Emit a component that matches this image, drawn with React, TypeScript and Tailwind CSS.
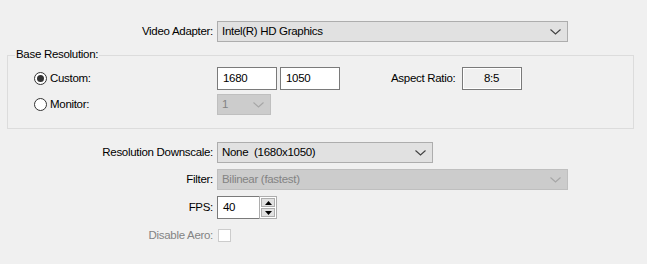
const Chevron = ({ disabled = false }: { disabled?: boolean }) => (
  <svg width="11" height="6" viewBox="0 0 11 6" className="shrink-0">
    <polyline
      points="0.5,0.5 5.5,5 10.5,0.5"
      fill="none"
      stroke={disabled ? '#a6a6a6' : '#404040'}
      strokeWidth="1.1"
    />
  </svg>
);

const Combo = ({
  value,
  width,
  disabled = false,
}: {
  value: string;
  width: string;
  disabled?: boolean;
}) => (
  <div
    className={`${width} h-[21px] flex items-center justify-between pl-[4px] pr-[6px] border ${
      disabled ? 'bg-[#cccccc] border-[#bfbfbf] text-[#838383]' : 'bg-[#e1e1e1] border-[#adadad] text-black'
    }`}
  >
    <span className="whitespace-pre">{value}</span>
    <Chevron disabled={disabled} />
  </div>
);

const Edit = ({ value }: { value: string }) => (
  <div className="w-[60px] h-[23px] flex items-center px-[5px] bg-white border border-[#7a7a7a]">{value}</div>
);

const Radio = ({ checked }: { checked?: boolean }) => (
  <div className="w-[13px] h-[13px] rounded-full border border-[#333333] bg-white flex items-center justify-center">
    {checked && <div className="w-[7px] h-[7px] rounded-full bg-[#333333]" />}
  </div>
);

const Row = ({ label, children, dim = false }: { label: string; children: React.ReactNode; dim?: boolean }) => (
  <div className="flex items-center">
    <div className={`w-[213px] text-right ${dim ? 'text-[#838383]' : 'text-black'}`}>{label}</div>
    <div className="ml-[4px]">{children}</div>
  </div>
);

export default function App() {
  return (
    <div
      className="w-[647px] h-[264px] bg-[#f0f0f0] pt-[21px] text-[11.5px] tracking-[-0.3px] leading-none overflow-hidden"
      style={{ fontFamily: '"Liberation Sans", Arial, sans-serif' }}
    >
      <Row label="Video Adapter:">
        <Combo value="Intel(R) HD Graphics" width="w-[351px]" />
      </Row>

      {/* Base Resolution group */}
      <div className="relative ml-[7px] mt-[13px] w-[627px] h-[74px] border border-[#dcdcdc] pt-[11px]">
        <span className="absolute left-[7px] top-[-7px] px-[1px] bg-[#f0f0f0]">Base Resolution:</span>

        <div className="flex items-center h-[23px]">
          <div className="w-[209px] flex items-center pl-[26px] gap-[3px]">
            <Radio checked />
            <span>Custom:</span>
          </div>
          <div className="flex gap-[3px]">
            <Edit value="1680" />
            <Edit value="1050" />
          </div>
          <span className="ml-[51px]">Aspect Ratio:</span>
          <div className="ml-[6px] w-[60px] h-[23px] flex items-center justify-center border border-[#7a7a7a] shadow-[inset_1px_1px_0_#ffffff,inset_-1px_-1px_0_#ffffff]">
            8:5
          </div>
        </div>

        <div className="flex items-center h-[21px] mt-[4px]">
          <div className="w-[209px] flex items-center pl-[26px] gap-[3px]">
            <Radio />
            <span>Monitor:</span>
          </div>
          <Combo value="1" width="w-[54px]" disabled />
        </div>
      </div>

      <div className="mt-[13px] flex flex-col">
        <Row label="Resolution Downscale:">
          <Combo value="None  (1680x1050)" width="w-[216px]" />
        </Row>
        <div className="mt-[6px]">
          <Row label="Filter:">
            <Combo value="Bilinear (fastest)" width="w-[351px]" disabled />
          </Row>
        </div>
        <div className="mt-[6px]">
          <Row label="FPS:">
            <div className="flex w-[60px] h-[23px]">
              <div className="flex-1 flex items-center pl-[5px] bg-white border border-r-0 border-[#7a7a7a]">40</div>
              <div className="w-[18px] flex flex-col gap-[1px] px-[1px] py-[1px] bg-white border border-[#adadad]">
                <div className="flex-1 bg-[#e1e1e1] border border-[#adadad] flex items-center justify-center">
                  <svg width="7" height="4" viewBox="0 0 7 4">
                    <polygon points="3.5,0 7,4 0,4" fill="#000" />
                  </svg>
                </div>
                <div className="flex-1 bg-[#e1e1e1] border border-[#adadad] flex items-center justify-center">
                  <svg width="7" height="4" viewBox="0 0 7 4">
                    <polygon points="0,0 7,0 3.5,4" fill="#000" />
                  </svg>
                </div>
              </div>
            </div>
          </Row>
        </div>
        <div className="mt-[10px]">
          <Row label="Disable Aero:" dim>
            <div className="ml-[1px] w-[13px] h-[13px] bg-white border border-[#cccccc]" />
          </Row>
        </div>
      </div>
    </div>
  );
}
